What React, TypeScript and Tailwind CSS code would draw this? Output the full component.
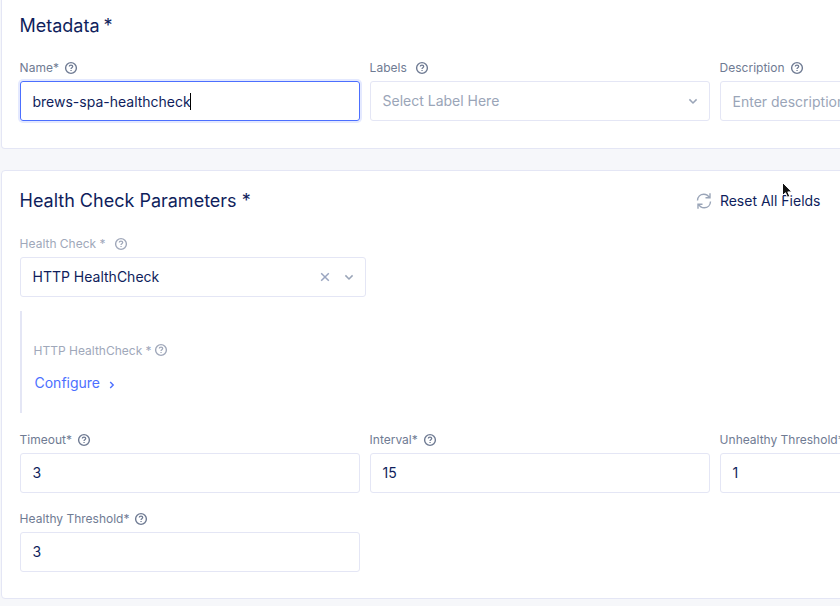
import type { ReactNode } from "react";

function HelpIcon({ className = "" }: { className?: string }) {
  return (
    <svg viewBox="0 0 14 14" className={`h-[14px] w-[14px] shrink-0 ${className}`} fill="none" stroke="currentColor">
      <circle cx="7" cy="7" r="5.4" strokeWidth="1.4" />
      <path d="M5.3 5.6c0-.9.75-1.4 1.7-1.4s1.7.5 1.7 1.4c0 1.1-1.65 1.15-1.65 2.3" strokeWidth="1.3" />
      <path d="M7.05 8.9v1.2" strokeWidth="1.3" />
    </svg>
  );
}

function Chevron({ className = "" }: { className?: string }) {
  return (
    <svg viewBox="0 0 10 10" className={`h-[10px] w-[10px] shrink-0 ${className}`} fill="none" stroke="currentColor" strokeWidth="1.5">
      <path d="M1.4 3.4 5 7l3.6-3.6" />
    </svg>
  );
}

function Label({ children, gap = "gap-[5px]", muted = false, textClass = "" }: { children: ReactNode; gap?: string; muted?: boolean; textClass?: string }) {
  return (
    <div className={`-ml-[0.4px] flex h-4 items-center whitespace-nowrap text-[12px] leading-4 ${gap} ${muted ? "text-[#a0a8ba]" : "text-[#6f7b93]"}`}>
      <span className={textClass}>{children}</span>
      <HelpIcon />
    </div>
  );
}

function Box({ children, className = "", focused = false }: { children: ReactNode; className?: string; focused?: boolean }) {
  return (
    <div className={`mt-[5px] flex h-10 items-center rounded-[3px] border pl-[11.5px] text-[14px] leading-5 ${focused ? "border-[#4c6fff] shadow-[0_0_0_2px_#e4e9ff]" : "border-[#e4e6f5]"} ${className}`}>
      {children}
    </div>
  );
}

function Field({ label, value }: { label: string; value: string }) {
  return (
    <div className="w-[340px] shrink-0">
      <Label>{label}</Label>
      <Box>{value}</Box>
    </div>
  );
}

export default function App() {
  return (
    <div className="relative h-[606px] w-[840px] overflow-hidden bg-[#f6f7fa] pl-px font-['Inter',sans-serif] text-[#0f1e5c]">
      <section className="h-[149px] w-[1070px] rounded-b-[4px] border-x border-b border-[#e4e6f5] bg-white pl-[18px] pt-[14px]">
        <h2 className="-ml-[0.5px] text-[18px] leading-6 [word-spacing:-1px]">Metadata *</h2>
        <div className="mt-[22px] flex gap-[10px]">
          <div className="w-[340px] shrink-0">
            <Label>Name*</Label>
            <Box focused>
              <span className="pt-px">brews-spa-healthcheck</span>
              <span className="-ml-[0.5px] h-[17px] w-px bg-black" />
            </Box>
          </div>
          <div className="w-[340px] shrink-0">
            <Label gap="gap-[8px]">Labels</Label>
            <Box className="justify-between pr-[11px] text-[#9aa5b8]">
              <span>Select Label Here</span>
              <Chevron />
            </Box>
          </div>
          <div className="w-[340px] shrink-0">
            <Label>Description</Label>
            <Box className="text-[#9aa5b8]"><span className="pt-px">Enter description</span></Box>
          </div>
        </div>
      </section>

      <section className="mt-[21px] h-[429px] w-[1070px] rounded-[4px] border border-[#e4e6f5] bg-white pl-[18px] pt-[18px]">
        <div className="flex w-[800.5px] items-center justify-between">
          <h2 className="-ml-[0.5px] text-[18px] leading-6">Health Check Parameters *</h2>
          <div className="flex items-center gap-[8px] text-[14px] leading-5">
            <svg viewBox="0 0 16 18" className="h-[18px] w-4 text-[#9aa5b8]" fill="none" stroke="currentColor" strokeWidth="1.4">
              <path d="M1.5 8.5C1.6 4.8 4.3 2.2 7.8 2.2c2.4 0 4.5 1.3 5.6 3.5M14 1.2v4.6H9.5" />
              <path d="M14.5 9.5c-.1 3.7-2.8 6.3-6.3 6.3-2.4 0-4.5-1.3-5.6-3.5M2 16.8v-4.6h4.5" />
            </svg>
            <span>Reset All Fields</span>
          </div>
        </div>
        <div className="mt-[23px] w-[346px]">
          <Label muted gap="gap-[8px]">Health Check *</Label>
          <Box className="pr-[11px]">
            <span className="flex-1">HTTP HealthCheck</span>
            <svg viewBox="0 0 10 10" className="mr-[14px] h-[10px] w-[10px] text-[#9aa5c0]" fill="none" stroke="currentColor" strokeWidth="1.5">
              <path d="m1.2 1.2 7.6 7.6m0-7.6L1.2 8.8" />
            </svg>
            <Chevron className="text-[#9aa5b8]" />
          </Box>
        </div>
        <div className="mt-[14px] h-[102px] border-l-2 border-[#e4e6f5] pl-3 pt-[31px]">
          <Label muted gap="gap-[2px]" textClass="pt-[2px]">HTTP HealthCheck *</Label>
          <div className="mt-[15px] flex items-center gap-2 pl-[0.5px] text-[14px] leading-5 text-[#4c6fff]">
            <span>Configure</span>
            <svg viewBox="0 0 8 10" className="mt-[3px] h-[10px] w-2" fill="none" stroke="currentColor" strokeWidth="1.4">
              <path d="m2.2 2 3 3-3 3" />
            </svg>
          </div>
        </div>
        <div className="mt-[19px] flex gap-[10px]">
          <Field label="Timeout*" value="3" />
          <Field label="Interval*" value="15" />
          <Field label="Unhealthy Threshold*" value="1" />
        </div>
        <div className="mt-[18px]">
          <Field label="Healthy Threshold*" value="3" />
        </div>
      </section>

      <svg viewBox="0 0 14 20" className="absolute left-[780px] top-[180px] h-5 w-[14px]">
        <path d="M2.5 2.5v13l3-2.8 2 4.6 2.3-1-2-4.4h4z" fill="#111" stroke="#fff" strokeWidth="1" />
      </svg>
    </div>
  );
}
